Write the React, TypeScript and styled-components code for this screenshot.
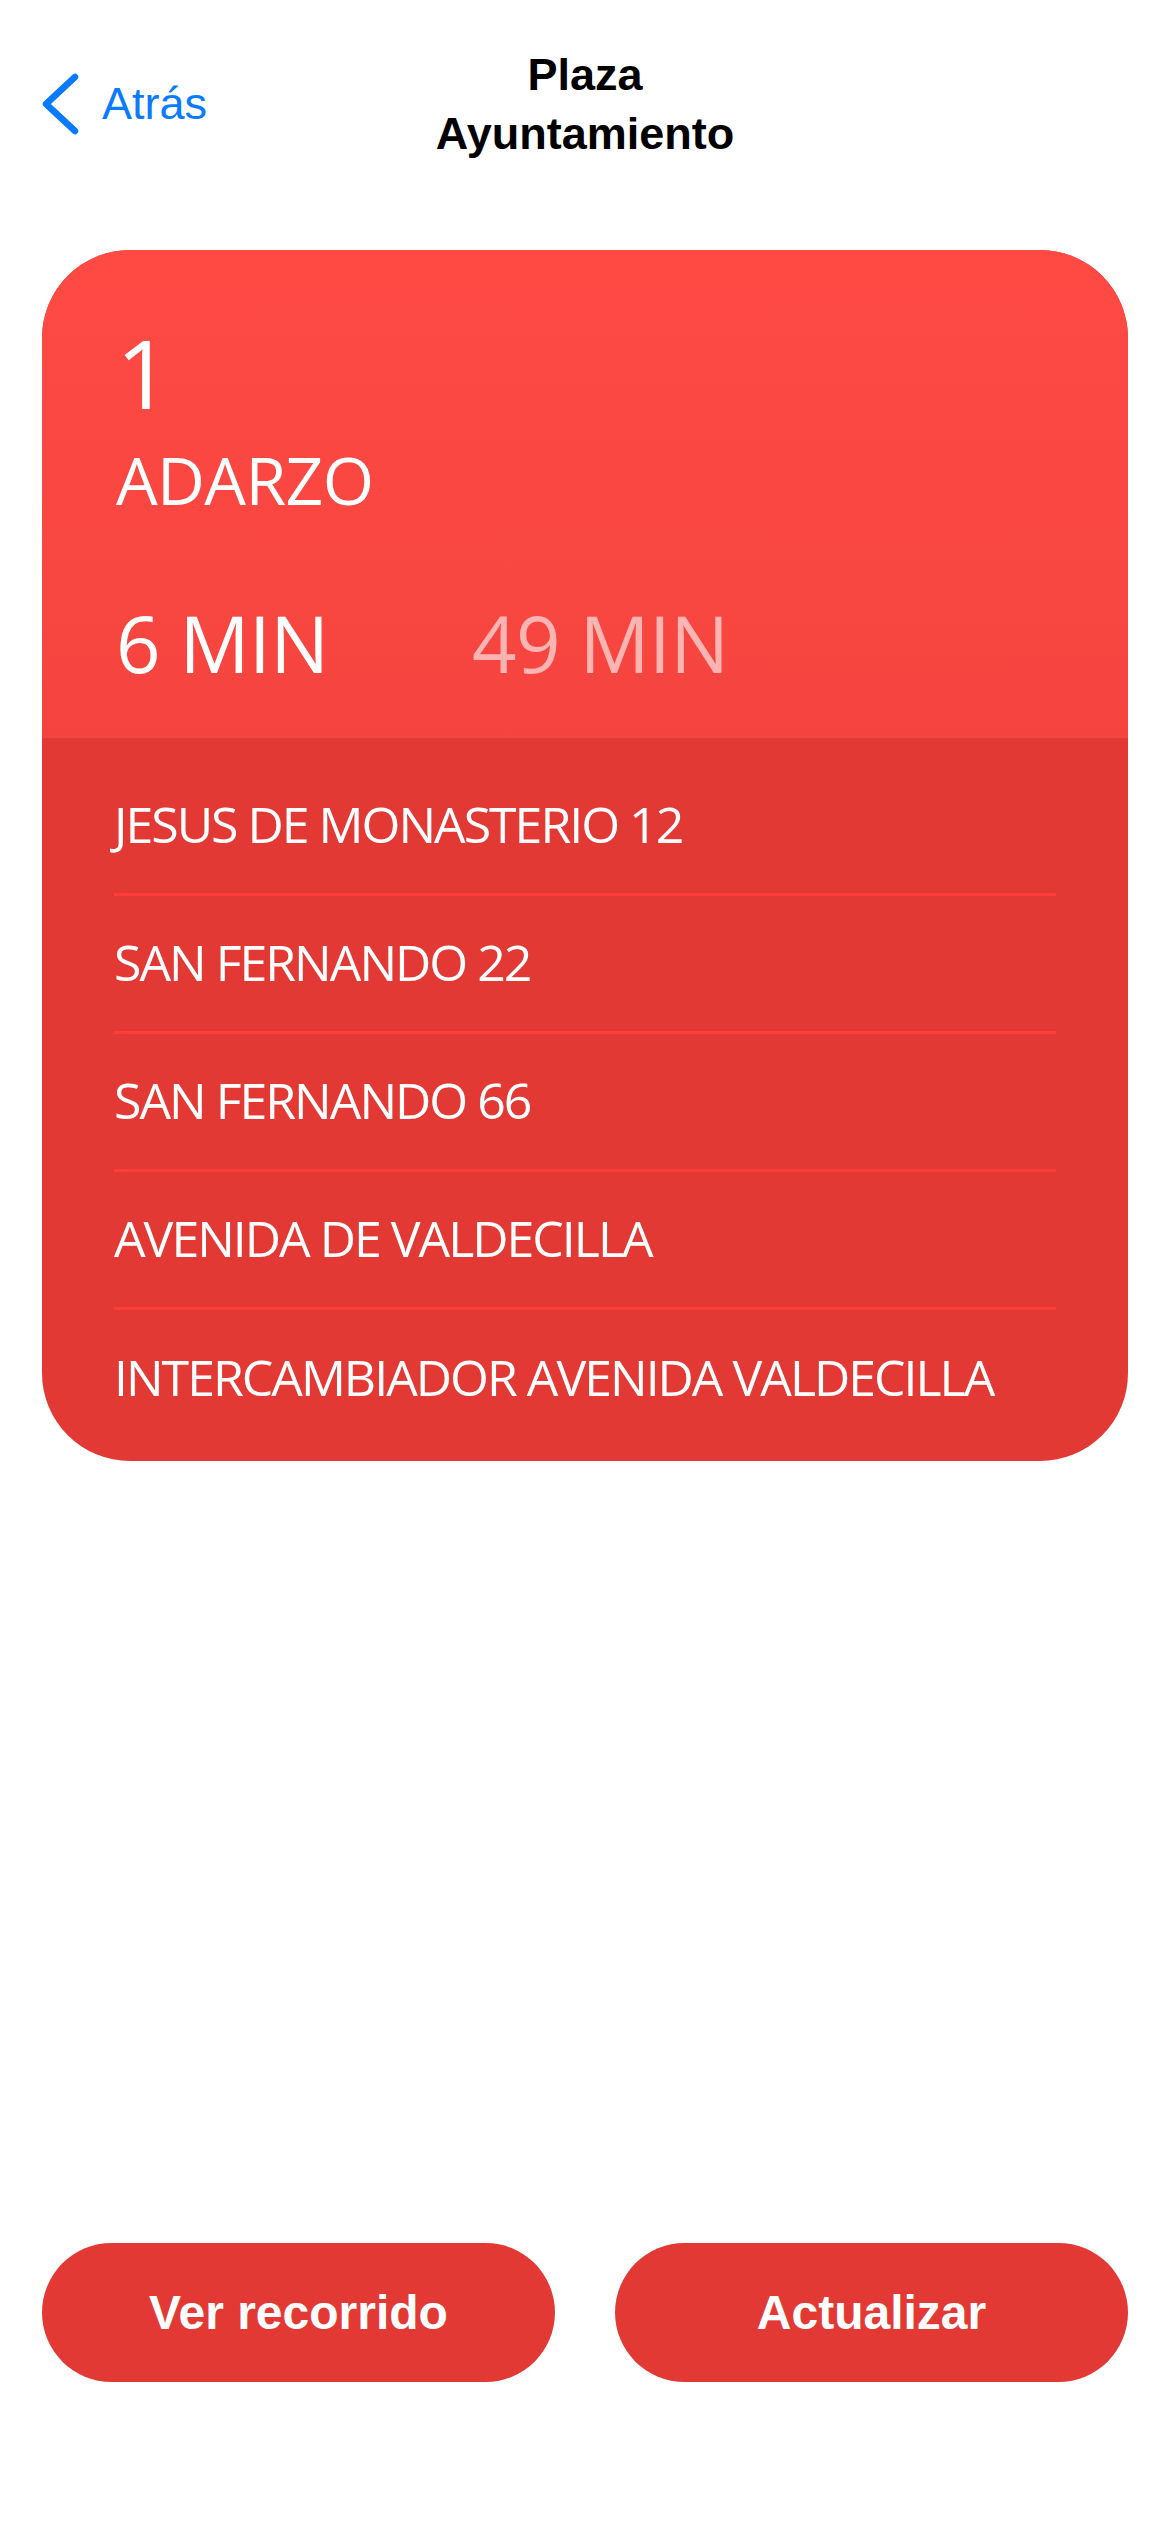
import React from "react";
import styled, { createGlobalStyle } from "styled-components";

const GlobalStyle = createGlobalStyle`
  html, body { margin: 0; padding: 0; background: #ffffff; }
  * { box-sizing: border-box; }
`;

const Page = styled.div`
  min-height: 2532px;
  display: flex;
  flex-direction: column;
  padding: 0 42px;
  font-family: "Liberation Sans", Arial, sans-serif;
`;

const NavBar = styled.header`
  display: grid;
  grid-template-columns: 1fr auto 1fr;
  align-items: center;
  padding-top: 45px;
  margin: 0 -42px;
`;

const BackButton = styled.button`
  justify-self: start;
  display: flex;
  align-items: center;
  gap: 22px;
  margin-left: 42px;
  padding: 0;
  border: none;
  background: none;
  color: #0a7aff;
  font-family: "Liberation Sans", Arial, sans-serif;
  font-size: 45px;
  line-height: 1.117;
  cursor: pointer;
`;

const Title = styled.h1`
  margin: 0;
  max-width: 340px;
  text-align: center;
  font-size: 45px;
  line-height: 59px;
  font-weight: 700;
  color: #000;
`;

const Card = styled.section`
  margin-top: 87px;
  border-radius: 88px;
  overflow: hidden;
  background: #e33935;
  font-family: "Open Sans", "Noto Sans", sans-serif;
  color: #ffffff;
  letter-spacing: -0.64px;
`;

const CardHead = styled.div`
  display: flex;
  flex-direction: column;
  padding: 64px 72px 47px 74px;
  background: linear-gradient(180deg, #ff4a44 0%, #f5443f 100%);
`;

const LineNumber = styled.div`
  font-size: 96px;
  line-height: 1.2;
`;

const Destination = styled.div`
  margin-top: 11px;
  font-size: 66px;
  line-height: 1.2;
`;

const Times = styled.div`
  display: grid;
  grid-template-columns: 356px auto;
  margin-top: 78px;
`;

const Time = styled.span<{ $muted?: boolean }>`
  font-size: 78px;
  line-height: 1.2;
  color: ${(p) => (p.$muted ? "rgba(255,255,255,0.6)" : "#ffffff")};
`;

const StopList = styled.ul`
  list-style: none;
  margin: 0;
  padding: 20px 72px 16px 72px;
`;

const Stop = styled.li`
  height: 138px;
  display: flex;
  align-items: center;
  padding-bottom: 3px;
  border-bottom: 3px solid #ff3d3a;
  font-size: 50px;
  line-height: 1.2;
  letter-spacing: -2px;

  &:last-child {
    height: 135px;
    padding-bottom: 0;
    border-bottom: none;
  }
`;

const Spacer = styled.div`
  flex: 1;
`;

const Actions = styled.div`
  display: grid;
  grid-template-columns: 1fr 1fr;
  gap: 60px;
  margin-bottom: 150px;
`;

const ActionButton = styled.button`
  height: 139px;
  border: none;
  border-radius: 70px;
  background: #e33935;
  color: #ffffff;
  font-family: "Liberation Sans", Arial, sans-serif;
  font-size: 48px;
  font-weight: 700;
  cursor: pointer;
`;

const stops = [
  "JESUS DE MONASTERIO 12",
  "SAN FERNANDO 22",
  "SAN FERNANDO 66",
  "AVENIDA DE VALDECILLA",
  "INTERCAMBIADOR AVENIDA VALDECILLA",
];

export default function App() {
  return (
    <>
      <GlobalStyle />
      <Page>
        <NavBar>
          <BackButton>
            <svg width="38" height="66" viewBox="0 0 38 66" fill="none">
              <polyline
                points="33,6 4,33 33,60"
                stroke="#0a7aff"
                strokeWidth="6.5"
                strokeLinecap="round"
                strokeLinejoin="round"
              />
            </svg>
            Atrás
          </BackButton>
          <Title>Plaza Ayuntamiento</Title>
          <div />
        </NavBar>
        <Card>
          <CardHead>
            <LineNumber>1</LineNumber>
            <Destination>ADARZO</Destination>
            <Times>
              <Time>6 MIN</Time>
              <Time $muted>49 MIN</Time>
            </Times>
          </CardHead>
          <StopList>
            {stops.map((s) => (
              <Stop key={s}>{s}</Stop>
            ))}
          </StopList>
        </Card>
        <Spacer />
        <Actions>
          <ActionButton>Ver recorrido</ActionButton>
          <ActionButton>Actualizar</ActionButton>
        </Actions>
      </Page>
    </>
  );
}
